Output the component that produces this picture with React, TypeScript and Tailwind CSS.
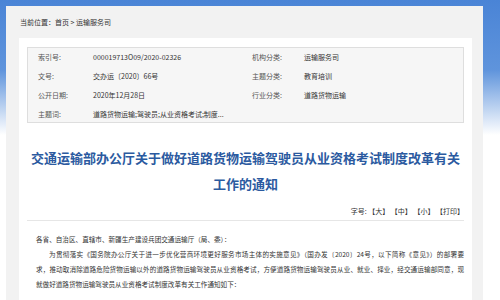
const cjk = { fontFamily: '"Noto Sans CJK SC", "Noto Sans", sans-serif' }

const leftRows = [
  ['索引号:', '000019713O09/2020-02326'],
  ['文号:', '交办运〔2020〕66号'],
  ['公开日期:', '2020年12月28日'],
  ['主题词:', '道路货物运输;驾驶员;从业资格考试;制度...'],
]

const rightRows = [
  ['机构分类:', '运输服务司'],
  ['主题分类:', '教育培训'],
  ['行业分类:', '道路货物运输'],
]

function MetaRow({ label, value, labelW }: { label: string; value: string; labelW: string }) {
  return (
    <div className="flex h-[19px] items-center">
      <span className={`${labelW} shrink-0 text-[#555]`}>{label}</span>
      <span className="whitespace-nowrap text-[#333]">{value}</span>
    </div>
  )
}

export default function App() {
  return (
    <div
      className="h-[300px] w-[500px] overflow-hidden bg-[linear-gradient(to_bottom,#4a84d6_0px,#5f94dc_70px,#ffffff_135px)] pl-[6px] pt-[6px]"
      style={cjk}
    >
      <div className="h-[294px] w-[477px] bg-[#f2f2f2]">
        <div className="flex h-[32px] items-center pl-[14px] text-[7px] text-[#333]">
          当前位置：首页 &gt; 运输服务司
        </div>

        <div className="ml-[13px] h-[262px] w-[453px] bg-white pt-[9px]">
          <div className="mx-[8px] grid h-[76px] grid-cols-[224px_1fr] overflow-hidden border border-[#dedede] bg-[#f6f6f6] text-[7px]">
            <div className="pl-[10px]">
              {leftRows.map(([l, v]) => (
                <MetaRow key={l} label={l} value={v} labelW="w-[55px]" />
              ))}
            </div>
            <div>
              {rightRows.map(([l, v]) => (
                <MetaRow key={l} label={l} value={v} labelW="w-[52px]" />
              ))}
            </div>
          </div>

          <h1 className="mt-[22px] whitespace-nowrap text-center text-[13px] font-bold leading-[26px] text-[#2b5aa0]">
            交通运输部办公厅关于做好道路货物运输驾驶员从业资格考试制度改革有关
            <br />
            工作的通知
          </h1>

          <div className="mx-[8px] border-b border-[#e6e6e6] pb-[2px] pt-[7px] text-right text-[7px] leading-[14px] text-[#333]">
            字号: 【大】 【中】 【小】 【打印】
          </div>

          <div className="ml-[17px] mr-[8px] mt-[11px] text-[6.6px] leading-[15px] text-[#333]">
            <div>各省、自治区、直辖市、新疆生产建设兵团交通运输厅（局、委）：</div>
            <div className="whitespace-nowrap pl-[13px] text-justify [text-align-last:justify]">
              为贯彻落实《国务院办公厅关于进一步优化营商环境更好服务市场主体的实施意见》（国办发〔2020〕24号，以下简称《意见》）的部署要
            </div>
            <div className="whitespace-nowrap text-justify [text-align-last:justify]">
              求，推动取消除道路危险货物运输以外的道路货物运输驾驶员从业资格考试，方便道路货物运输驾驶员从业、就业、择业，经交通运输部同意，现
            </div>
            <div>就做好道路货物运输驾驶员从业资格考试制度改革有关工作通知如下：</div>
          </div>
        </div>
      </div>
    </div>
  )
}
